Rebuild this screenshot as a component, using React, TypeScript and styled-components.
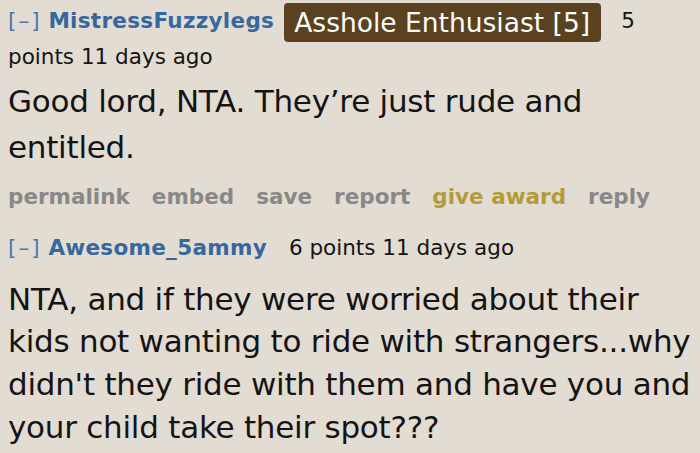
import styled, { createGlobalStyle } from "styled-components";

const GlobalStyle = createGlobalStyle`
  html, body {
    margin: 0;
    padding: 0;
    background: #e3dcd2;
  }
  body {
    font-family: "DejaVu Sans", Verdana, sans-serif;
    color: #141414;
  }
`;

const comments = [
  {
    author: "MistressFuzzylegs",
    flair: "Asshole Enthusiast [5]",
    points: "5 points",
    age: "11 days ago",
    body: "Good lord, NTA. They’re just rude and entitled.",
    buttons: true,
  },
  {
    author: "Awesome_5ammy",
    flair: "",
    points: "6 points",
    age: "11 days ago",
    body: "NTA, and if they were worried about their kids not wanting to ride with strangers...why didn't they ride with them and have you and your child take their spot???",
    buttons: false,
  },
];

export default function App() {
  return (
    <>
      <GlobalStyle />
      <Page>
        {comments.map((c) => (
          <Comment key={c.author}>
            <Tagline $first={!!c.flair}>
              <Expand>[–]</Expand> <Author>{c.author}</Author>
              {c.flair && <Flair>{c.flair}</Flair>}
              <Score $wide={!!c.flair}>{c.points}</Score> {c.age}
            </Tagline>
            <Body $first={!!c.flair}>{c.body}</Body>
            {c.buttons && (
              <Buttons>
                <li>permalink</li>
                <li>embed</li>
                <li>save</li>
                <li>report</li>
                <Award>give award</Award>
                <li>reply</li>
              </Buttons>
            )}
          </Comment>
        ))}
      </Page>
    </>
  );
}

const Page = styled.div`
  padding: 0 0 0 8px;
`;

const Comment = styled.div`
  display: flex;
  flex-direction: column;
`;

const Tagline = styled.p<{ $first: boolean }>`
  margin: ${(p) => (p.$first ? "3px 0 0" : "18px 0 0")};
  font-size: 21.5px;
  line-height: 35px;
  color: #141414;
  padding-right: 8px;
`;

const Expand = styled.span`
  color: #4a79b0;
  letter-spacing: 2px;
`;

const Author = styled.span`
  color: #36679e;
  font-weight: bold;
  letter-spacing: 0.3px;
  margin-right: 10px;
`;

const Flair = styled.span`
  display: inline-block;
  background: #5a4220;
  color: #fff;
  font-size: 26.5px;
  line-height: 39px;
  padding: 0 11px 0 10px;
  border-radius: 4px;
  vertical-align: middle;
  margin: -3px 20px -3px 0;
`;

const Score = styled.span<{ $wide: boolean }>`
  margin-left: ${(p) => (p.$wide ? "0" : "12px")};
`;

const Body = styled.p<{ $first: boolean }>`
  margin: ${(p) => (p.$first ? "4px 0 0" : "13px 0 0")};
  font-size: 31px;
  letter-spacing: -0.25px;
  line-height: ${(p) => (p.$first ? "46px" : "42.7px")};
`;

const Buttons = styled.ul`
  display: flex;
  gap: 22px;
  list-style: none;
  margin: 12px 0 0;
  padding: 0;
  font-size: 21.5px;
  line-height: 30px;
  font-weight: bold;
  color: #888;
`;

const Award = styled.li`
  color: #b39b3a;
`;
